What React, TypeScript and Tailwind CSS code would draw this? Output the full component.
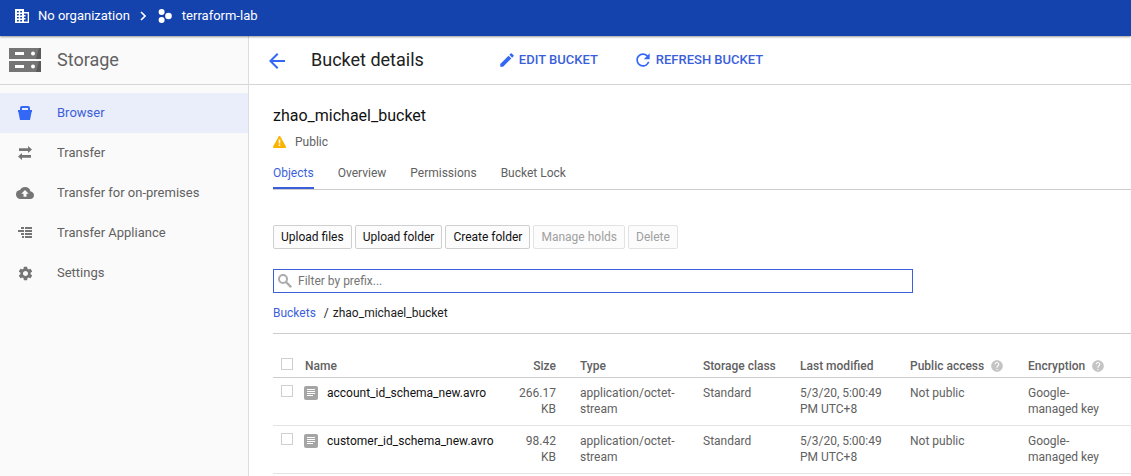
import React from "react";
import {
  MdArrowBack,
  MdCloudUpload,
  MdEdit,
  MdHelp,
  MdRefresh,
  MdSettings,
} from "react-icons/md";

function OrganizationIcon() {
  return (
    <svg width="14" height="14" viewBox="0 0 14 14" fill="currentColor" aria-hidden="true">
      <path
        fillRule="evenodd"
        d="M0 0h9v3h5v11H0zM2 2v1.500h1.800V2zM5.200 2v1.500H7V2zM2 5v1.500h1.800V5zM5.200 5v1.500H7V5zM2 8v1.500h1.800V8zM5.200 8v1.500H7V8zM2 11v1.500h1.800V11zM5.200 11v1.500H7V11zM9 4.500v1.500h1.500v1.500H9v1.500h1.500v1.500H9v2h3.700v-8z"
      />
    </svg>
  );
}

function ChevronIcon() {
  return (
    <svg width="6" height="10" viewBox="0 0 6 10" fill="none" stroke="currentColor" strokeWidth="1.600" aria-hidden="true">
      <path d="M1 1l4 4-4 4" />
    </svg>
  );
}

function ProjectIcon() {
  return (
    <svg width="14" height="14" viewBox="0 0 14 14" fill="currentColor" aria-hidden="true">
      <circle cx="3.6" cy="3" r="3" />
      <circle cx="3.6" cy="11" r="3" />
      <circle cx="10.5" cy="7" r="3.3" />
    </svg>
  );
}

function StorageLogo() {
  return (
    <svg width="32" height="24" viewBox="0 0 32 24" aria-hidden="true">
      {[0, 13].map((y) => (
        <g key={y}>
          <rect y={y} width="32" height="11" fill="#757575" />
          <path d={`M30 ${y}h2v11h-5z`} fill="#5a5a5a" />
          <rect x="6" y={y + 4} width="9" height="3" fill="#fff" />
          <circle cx="24" cy={y + 5.5} r="2" fill="#fff" />
        </g>
      ))}
    </svg>
  );
}

function BucketIcon() {
  return (
    <svg width="14" height="14" viewBox="0 0 14 14" fill="currentColor" aria-hidden="true">
      <path
        fillRule="evenodd"
        d="M0 4h2V2a2 2 0 0 1 2-2h6a2 2 0 0 1 2 2v2h2v2h-.4L12 14H2L.4 6H0zM4 2v2h6V2z"
      />
    </svg>
  );
}

function TransferIcon() {
  return (
    <svg width="14" height="14" viewBox="0 0 14 14" fill="currentColor" aria-hidden="true">
      <path d="M1 2.200h9V0l4 3.500L10 7V4.900H1zM13 9.100H4V7l-4 3.500L4 14v-2.200h9z" />
    </svg>
  );
}

function ApplianceIcon() {
  return (
    <svg width="14" height="12" viewBox="0 0 14 12" fill="currentColor" aria-hidden="true">
      <path d="M3 0h3v2H3zM7 0h7v2H7zM0 3h6v2H0zM7 3h7v2H7zM3 6h3v2H3zM7 6h7v2H7zM4 9h2v2H4zM7 9h7v2H7z" />
    </svg>
  );
}

function WarningIcon() {
  return (
    <svg width="13" height="12" viewBox="0 0 13 12" aria-hidden="true">
      <path d="M6.500 1L12 11H1z" fill="#fbb300" stroke="#fbb300" strokeWidth="2" strokeLinejoin="round" />
      <path d="M5.700 3.500h1.600v4H5.700zM5.700 8.500h1.600V10H5.700z" fill="#fff" />
    </svg>
  );
}

function SearchIcon() {
  return (
    <svg width="14" height="14" viewBox="0 0 14 14" fill="none" stroke="#acacac" strokeWidth="2" aria-hidden="true">
      <circle cx="5" cy="5" r="4" />
      <path d="M8 8l5.200 5.200" strokeWidth="2.400" />
    </svg>
  );
}

function FileIcon() {
  return (
    <svg className="mt-px block" width="14" height="14" viewBox="0 0 14 14" aria-hidden="true">
      <rect width="14" height="14" rx="2" fill="#a5a5a5" />
      <path d="M3 3h8v1H3zM3 5h8v1H3zM3 7h8v1H3zM3 9h6v1H3z" fill="#fff" />
    </svg>
  );
}

const navItems = [
  { label: "Browser", icon: <BucketIcon />, active: true },
  { label: "Transfer", icon: <TransferIcon /> },
  { label: "Transfer for on-premises", icon: <MdCloudUpload size={18} /> },
  { label: "Transfer Appliance", icon: <ApplianceIcon /> },
  { label: "Settings", icon: <MdSettings size={17} /> },
];

const tabs = ["Objects", "Overview", "Permissions", "Bucket Lock"];

const actions = [
  { label: "Upload files" },
  { label: "Upload folder" },
  { label: "Create folder" },
  { label: "Manage holds", disabled: true },
  { label: "Delete", disabled: true },
];

const files = [
  { name: "account_id_schema_new.avro", size: "266.17 KB" },
  { name: "customer_id_schema_new.avro", size: "98.42 KB" },
];

function Tick({ label }: { label: string }) {
  return (
    <input
      type="checkbox"
      aria-label={label}
      className="block size-3 appearance-none border border-[#cfcfcf] bg-white checked:bg-[#3367d6]"
    />
  );
}

function HelpHeading({ children }: { children: string }) {
  return (
    <span className="flex items-center gap-1.5 whitespace-nowrap">
      {children}
      <MdHelp size={14} className="text-[#c4c4c4]" />
    </span>
  );
}

export default function App() {
  return (
    <div className="flex min-h-screen flex-col bg-white font-['Roboto',sans-serif] text-xs text-[#616161]">
      <header className="z-10 flex h-9 shrink-0 items-center bg-[#1543ad] pb-1 pl-[15px] text-[13px] text-white shadow-[0_1px_2px_rgba(0,0,0,0.4)]">
        <OrganizationIcon />
        <a href="#organization" className="mr-2.5 ml-[9px]">No organization</a>
        <ChevronIcon />
        <span className="ml-3"><ProjectIcon /></span>
        <a href="#project" className="ml-2.5">terraform-lab</a>
      </header>

      <div className="flex flex-1">
        <aside className="w-[249px] shrink-0 border-r border-[#dcdcdc] bg-[#fafafa]">
          <div className="flex h-[49px] items-center gap-4 border-b border-[#d4d4d4] pl-[9px]">
            <StorageLogo />
            <h2 className="text-lg">Storage</h2>
          </div>
          <nav className="pt-2 text-[13px]">
            {navItems.map((item) => (
              <a
                key={item.label}
                href="#nav"
                aria-current={item.active ? "page" : undefined}
                className={`flex h-10 items-center ${item.active ? "bg-[#eaeefa] text-[#3b5fdb]" : ""}`}
              >
                <span
                  className={`ml-4 mr-[23px] flex w-[18px] justify-center ${item.active ? "text-[#3367f6]" : "text-[#757575]"}`}
                >
                  {item.icon}
                </span>
                {item.label}
              </a>
            ))}
          </nav>
        </aside>

        <main className="min-w-0 flex-1">
          <div className="flex h-[49px] items-center border-b border-[#d4d4d4] pl-4 text-[13px] font-medium text-[#3b5fdb]">
            <button type="button" aria-label="Back" className="mr-[22px] pt-0.5 text-[#3367f6]">
              <MdArrowBack size={24} className="block" />
            </button>
            <h1 className="mr-[74px] text-lg font-normal text-[#212121]">Bucket details</h1>
            <button type="button" className="mr-[35px] flex items-center gap-[3px]">
              <MdEdit size={18} className="text-[#3367f6]" />
              EDIT BUCKET
            </button>
            <button type="button" className="flex items-center gap-[3px]">
              <MdRefresh size={20} className="text-[#3367f6]" />
              REFRESH BUCKET
            </button>
          </div>

          <div className="pl-6">
            <h2 className="pt-[19px] text-base leading-6 text-[#111111]">zhao_michael_bucket</h2>
            <p className="mt-1.5 flex h-4 items-center gap-[9px]">
              <WarningIcon />
              Public
            </p>

            <div role="tablist" className="mt-3.5 flex gap-6 border-b border-[#cccccc]">
              {tabs.map((tab, i) => (
                <button
                  key={tab}
                  type="button"
                  role="tab"
                  aria-selected={i === 0}
                  className={`h-[25px] border-b-2 pt-px pb-1.5 leading-4 ${i === 0 ? "border-[#3b5fdb] text-[#3b5fdb]" : "border-transparent"}`}
                >
                  {tab}
                </button>
              ))}
            </div>

            <div className="mt-[35px] flex gap-[3px]">
              {actions.map((action) => (
                <button
                  key={action.label}
                  type="button"
                  disabled={action.disabled}
                  className="h-6 rounded-xs border border-[#cfcfcf] bg-[#fcfcfc] px-[7px] text-[#111111] disabled:border-[#e3e3e3] disabled:text-[#a0a0a0]"
                >
                  {action.label}
                </button>
              ))}
            </div>

            <label className="mt-5 flex h-6 w-full max-w-[640px] items-center gap-1.5 border border-[#3b5fdb] pl-1">
              <SearchIcon />
              <input
                type="text"
                aria-label="Filter by prefix"
                placeholder="Filter by prefix..."
                className="w-full flex-1 outline-none placeholder:text-[#757575]"
              />
            </label>

            <nav aria-label="Breadcrumb" className="mt-3 flex leading-4 text-[#212121]">
              <a href="#buckets" className="mr-2 text-[#3b5fdb]">Buckets</a>
              <span className="mr-1">/</span>
              <span>zhao_michael_bucket</span>
            </nav>

            <div className="mt-3 border-t border-[#cccccc] pt-6">
              <table className="w-full table-fixed border-collapse text-left leading-4">
                <colgroup>
                  <col className="w-8" />
                  <col />
                  <col className="w-[70px]" />
                  <col className="w-[123px]" />
                  <col className="w-[97px]" />
                  <col className="w-[110px]" />
                  <col className="w-[118px]" />
                  <col className="w-[103px]" />
                </colgroup>
                <thead>
                  <tr className="h-[19px] border-b border-[#cccccc] align-top [&>th]:p-0 [&>th]:font-medium">
                    <th className="pl-2!"><Tick label="Select all" /></th>
                    <th>Name</th>
                    <th className="pr-6! text-right">Size</th>
                    <th>Type</th>
                    <th>Storage class</th>
                    <th>Last modified</th>
                    <th><HelpHeading>Public access</HelpHeading></th>
                    <th><HelpHeading>Encryption</HelpHeading></th>
                  </tr>
                </thead>
                <tbody>
                  {files.map((file) => (
                    <tr
                      key={file.name}
                      className="h-12 border-b border-[#e3e3e3] align-top [&>td]:pt-[7px] [&>td]:pb-2"
                    >
                      <td className="pl-2"><Tick label={`Select ${file.name}`} /></td>
                      <td>
                        <a href="#file" className="-ml-px flex gap-[9px] whitespace-nowrap text-[#111111]">
                          <FileIcon />
                          {file.name}
                        </a>
                      </td>
                      <td className="pr-6 text-right">{file.size}</td>
                      <td className="pr-6">application/octet-stream</td>
                      <td>Standard</td>
                      <td className="pr-6">5/3/20, 5:00:49 PM UTC+8</td>
                      <td>Not public</td>
                      <td className="pr-6">Google-managed key</td>
                    </tr>
                  ))}
                </tbody>
              </table>
            </div>
          </div>
        </main>
      </div>
    </div>
  );
}
